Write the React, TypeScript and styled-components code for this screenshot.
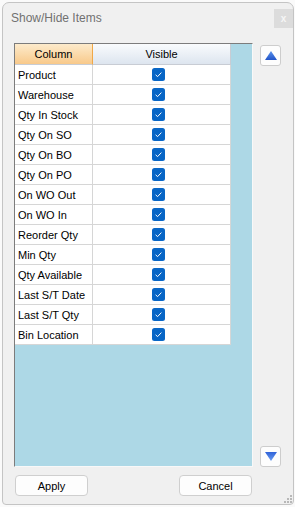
import styled, { createGlobalStyle } from "styled-components";

const items = [
    "Product",
    "Warehouse",
    "Qty In Stock",
    "Qty On SO",
    "Qty On BO",
    "Qty On PO",
    "On WO Out",
    "On WO In",
    "Reorder Qty",
    "Min Qty",
    "Qty Available",
    "Last S/T Date",
    "Last S/T Qty",
    "Bin Location",
];

const GlobalStyle = createGlobalStyle`
    html, body {
        margin: 0;
        padding: 0;
        background-color: #fafafa;
        font-family: "Liberation Sans", Arial, sans-serif;
    }
`;

const Check = () => (
    <svg width="13" height="13" viewBox="0 0 13 13">
        <rect x="0" y="0" width="13" height="13" rx="2.5" fill="#0866c6" />
        <path d="M3.6 6.8 L5.6 8.6 L9.4 4.6" fill="none" stroke="#ffffff" strokeWidth="1" />
    </svg>
);

const Arrow = ({ down }: { down?: boolean }) => (
    <svg width="12" height="9" viewBox="0 0 12 9">
        <defs>
            <linearGradient id={down ? "gd" : "gu"} x1="0" y1="0" x2="0" y2="1">
                <stop offset="0" stopColor={down ? "#2f62d8" : "#5a92ec"} />
                <stop offset="1" stopColor={down ? "#6a9cf0" : "#2254c8"} />
            </linearGradient>
        </defs>
        <path
            d={down ? "M0 0 L12 0 L6 9 Z" : "M6 0 L12 9 L0 9 Z"}
            fill={`url(#${down ? "gd" : "gu"})`}
        />
    </svg>
);

const Grip = () => (
    <svg width="9" height="9" viewBox="0 0 9 9">
        {[
            [7, 1],
            [4, 4],
            [7, 4],
            [1, 7],
            [4, 7],
            [7, 7],
        ].map(([x, y]) => (
            <rect key={`${x}-${y}`} x={x} y={y} width="2" height="2" fill="#b8b8b8" />
        ))}
    </svg>
);

export default function App() {
    return (
        <>
            <GlobalStyle />
            <Window>
                <TitleBar>
                    <Title>Show/Hide Items</Title>
                    <CloseButton>x</CloseButton>
                </TitleBar>
                <Body>
                    <Grid>
                        <Table>
                            <HeaderCell $orange>Column</HeaderCell>
                            <HeaderCell>Visible</HeaderCell>
                            {items.map((name) => (
                                <Row key={name}>
                                    <NameCell>{name}</NameCell>
                                    <CheckCell>
                                        <Check />
                                    </CheckCell>
                                </Row>
                            ))}
                        </Table>
                    </Grid>
                    <ScrollColumn>
                        <ScrollButton>
                            <Arrow />
                        </ScrollButton>
                        <ScrollButton>
                            <Arrow down />
                        </ScrollButton>
                    </ScrollColumn>
                </Body>
                <Footer>
                    <Button>Apply</Button>
                    <Button>Cancel</Button>
                </Footer>
                <GripBox>
                    <Grip />
                </GripBox>
            </Window>
        </>
    );
}

const Window = styled.div`
    box-sizing: border-box;
    position: relative;
    margin: 2px 0 0 2px;
    width: 292px;
    height: 503px;
    display: flex;
    flex-direction: column;
    background-color: #f0f0f0;
    border: 1px solid #c4c4c4;
    border-radius: 7px 7px 4px 4px;
`;

const TitleBar = styled.div`
    height: 28px;
    display: flex;
    align-items: flex-start;
    justify-content: space-between;
    padding-left: 8px;
`;

const Title = styled.div`
    margin-top: 8px;
    font-size: 12px;
    color: #707070;
`;

const CloseButton = styled.div`
    margin-top: 6px;
    width: 19px;
    height: 19px;
    display: flex;
    align-items: center;
    justify-content: center;
    background-color: #dcdcdc;
    color: #f6f6f6;
    font-size: 10px;
    font-weight: bold;
    line-height: 1;
`;

const Body = styled.div`
    display: flex;
    padding: 12px 0 0 11px;
    gap: 7px;
`;

const Grid = styled.div`
    box-sizing: border-box;
    width: 239px;
    height: 424px;
    background-color: #add8e6;
    border-top: 1px solid #7c7c7c;
    border-left: 1px solid #7c7c7c;
    border-right: 1px solid #f8f8f8;
    border-bottom: 1px solid #f8f8f8;
`;

const Table = styled.div`
    width: 216px;
    display: grid;
    grid-template-columns: 78px 138px;
    background-color: #ffffff;
`;

const HeaderCell = styled.div<{ $orange?: boolean }>`
    box-sizing: border-box;
    height: 21px;
    display: flex;
    align-items: center;
    justify-content: center;
    font-size: 11px;
    color: #000000;
    border-bottom: 1px solid #c8ccd4;
    border-right: 1px solid ${(p) => (p.$orange ? "#f0a848" : "#c8ccd4")};
    background: ${(p) =>
        p.$orange
            ? "linear-gradient(#fdebcc, #f8c98a)"
            : "linear-gradient(#f9fbfd, #dde5ef)"};
`;

const Row = styled.div`
    display: contents;
`;

const NameCell = styled.div`
    box-sizing: border-box;
    height: 20px;
    padding-left: 3px;
    display: flex;
    align-items: center;
    font-size: 11px;
    color: #000000;
    white-space: nowrap;
    border-right: 1px solid #d6d6d6;
    border-bottom: 1px solid #d6d6d6;
`;

const CheckCell = styled.div`
    box-sizing: border-box;
    height: 20px;
    padding-right: 6px;
    display: flex;
    align-items: center;
    justify-content: center;
    border-right: 1px solid #d6d6d6;
    border-bottom: 1px solid #d6d6d6;

    svg {
        display: block;
    }
`;

const ScrollColumn = styled.div`
    height: 424px;
    padding-top: 2px;
    box-sizing: border-box;
    display: flex;
    flex-direction: column;
    justify-content: space-between;
`;

const ScrollButton = styled.div`
    box-sizing: border-box;
    width: 21px;
    height: 21px;
    display: flex;
    align-items: center;
    justify-content: center;
    background-color: #fdfdfd;
    border: 1px solid #cdcdcd;
    border-radius: 3px;
`;

const Footer = styled.div`
    box-sizing: border-box;
    display: flex;
    justify-content: space-between;
    padding: 8px 0 0 12px;
    width: 249px;
`;

const Button = styled.div`
    box-sizing: border-box;
    width: 73px;
    height: 21px;
    display: flex;
    align-items: center;
    justify-content: center;
    font-size: 11px;
    color: #000000;
    background-color: #fdfdfd;
    border: 1px solid #cfcfcf;
    border-radius: 4px;
`;

const GripBox = styled.div`
    position: absolute;
    right: 1px;
    bottom: 1px;
    display: flex;
`;
